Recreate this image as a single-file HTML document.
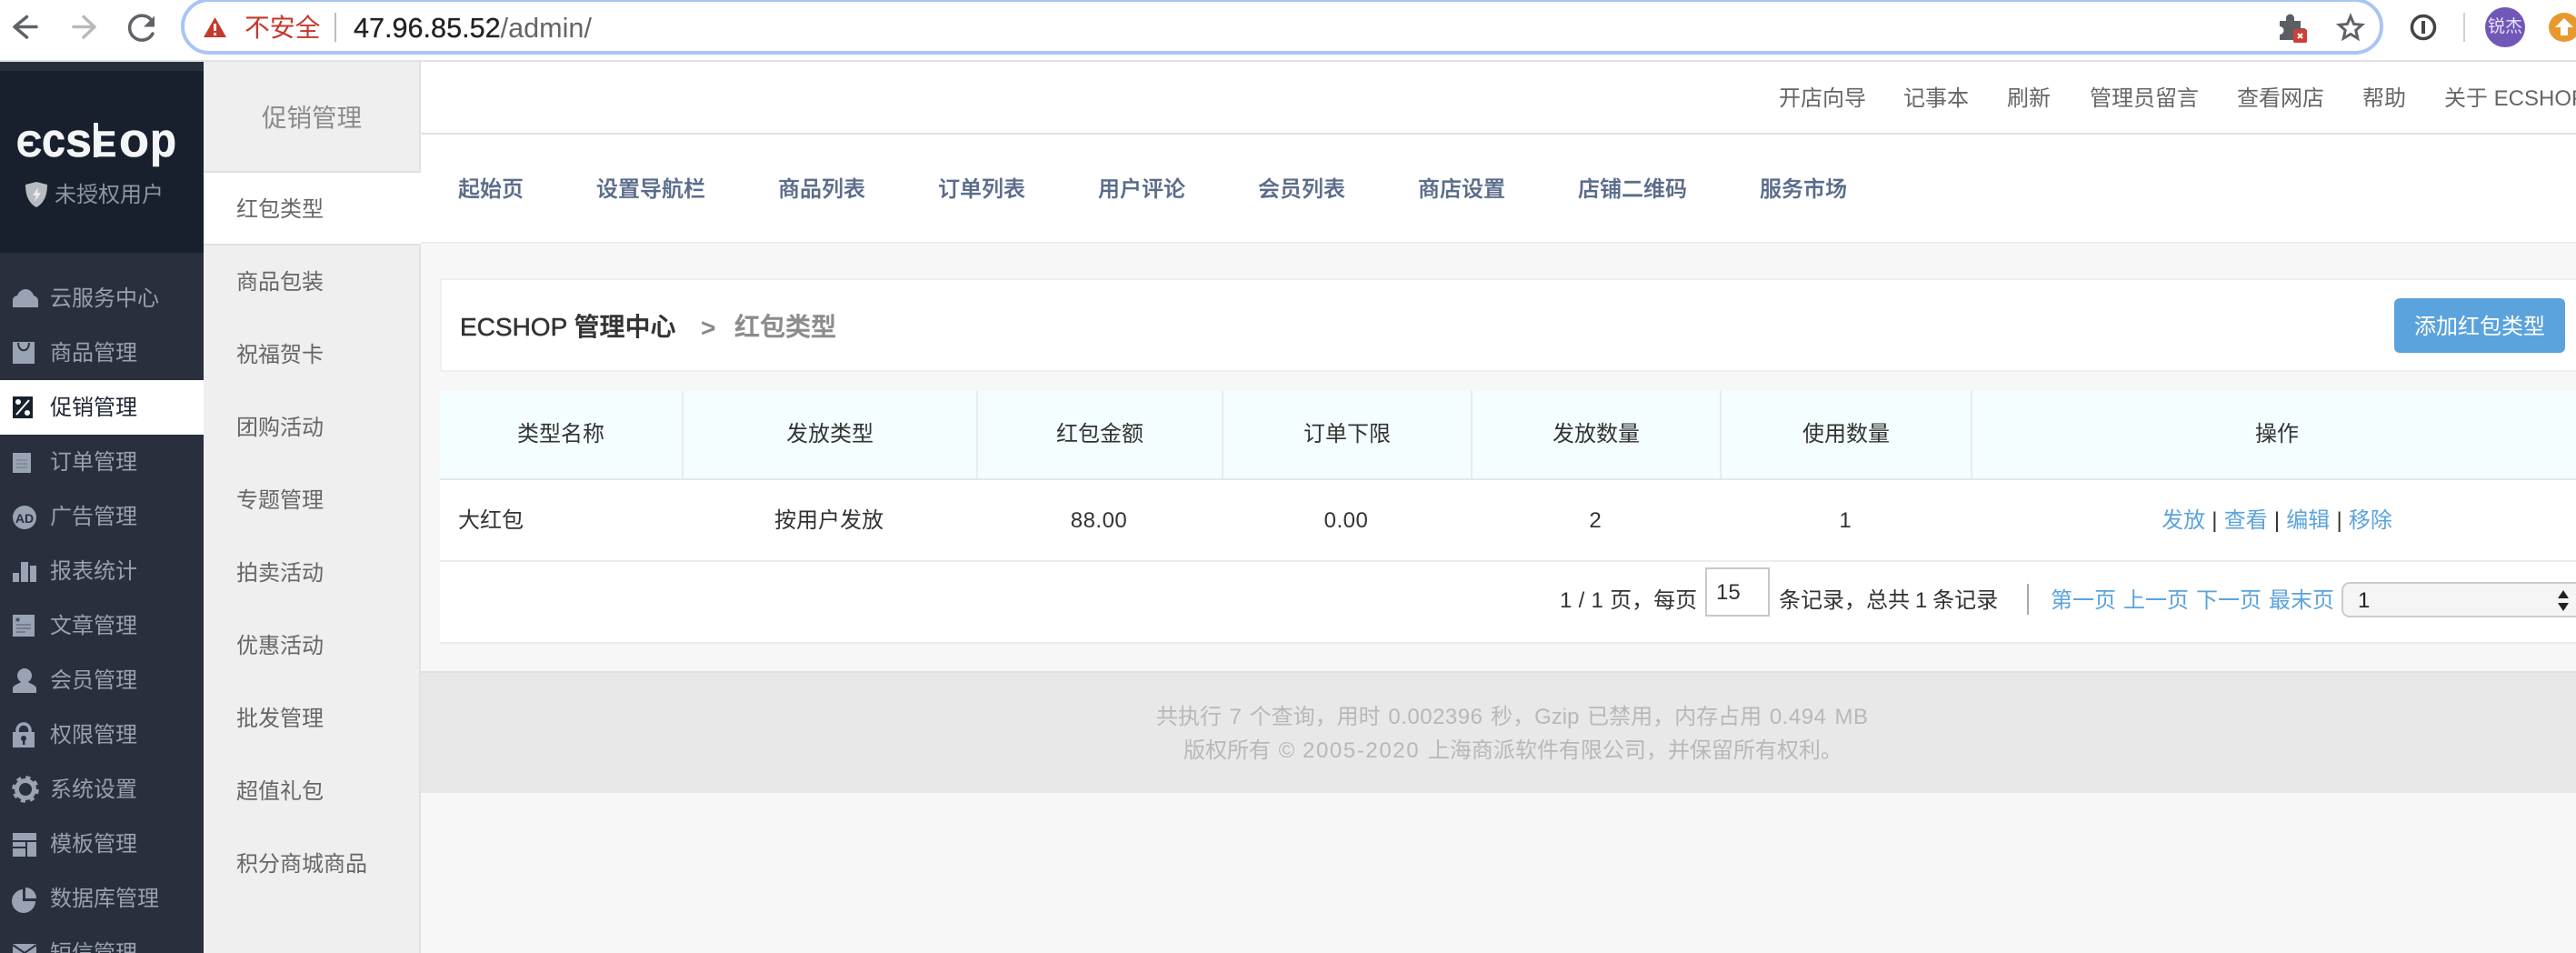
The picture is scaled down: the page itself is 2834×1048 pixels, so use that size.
<!DOCTYPE html>
<html lang="zh-CN"><head><meta charset="utf-8"><title>ECSHOP 管理中心</title>
<style>
*{margin:0;padding:0;box-sizing:border-box}
html,body{width:2834px;height:1048px;overflow:hidden;background:#f7f7f7}
body{position:relative;font-family:"Liberation Sans","Noto Sans CJK SC",sans-serif;font-size:24px;color:#333}
.a{position:absolute}
.t{position:absolute;white-space:nowrap;line-height:40px;height:40px;margin-top:2px}
.c{transform:translateX(-50%)}
.m{color:#98a1b0;left:55px}
.s{color:#666;left:260px}
.h{color:#666}
.n{color:#5a6c8a;font-weight:500;-webkit-text-stroke:.3px #5a6c8a}
.b{color:#5ba3dc}
.f{color:#b8b8b8;word-spacing:2px}
svg{position:absolute;overflow:visible}
.g{fill:#9aa3b3}
.l{font-family:"Liberation Sans",sans-serif;font-weight:700;fill:#f4f5f6;stroke:#f4f5f6;stroke-width:.6}
</style></head><body>
<!-- toolbar -->
<div class="a" style="left:0;top:0;width:2834px;height:66px;background:#fff"></div>
<div class="a" style="left:0;top:66px;width:2834px;height:2px;background:#e2e2e2"></div>
<svg style="left:0;top:0" width="200" height="66" fill="none" stroke-linecap="round" stroke-linejoin="round">
<path d="M16 29.500H40M29.500 18.500L16 29.500L29.500 41" stroke="#5f6368" stroke-width="3.500"/>
<path d="M81 29.500H104M92 18.500L104 29.500L92 41" stroke="#b8b9ba" stroke-width="3.500"/>
<path d="M166.500 22A13.500 13.500 0 1 0 168 37" stroke="#5f6368" stroke-width="3.500"/>
<path d="M170 17.500V29.500H158Z" fill="#5f6368"/>
</svg>
<div class="a" style="left:199px;top:-2px;width:2423px;height:62px;border:4px solid #a8c5f4;border-radius:31px;background:#fff"></div>
<svg style="left:224px;top:18px" width="26" height="24"><path d="M12.500 1L25 23H0Z" fill="#c5392c"/><rect x="11" y="8" width="3" height="8" fill="#fff"/><rect x="11" y="18" width="3" height="3" fill="#fff"/></svg>
<div class="t" style="left:269px;top:9px;font-size:27.800px;color:#c5392c">不安全</div>
<div class="a" style="left:368px;top:14px;width:2px;height:32px;background:#bdbdbd"></div>
<div class="t" style="left:389px;top:9px;font-size:30.600px;color:#222;-webkit-text-stroke:.3px #222">47.96.85.52<span style="color:#666;-webkit-text-stroke:0">/admin/</span></div>
<svg style="left:2506px;top:14px" width="34" height="34"><path d="M2 9H9V6A4.500 4.500 0 0 1 18 6V9H25V17H28A4 4 0 0 1 28 25H25V30H2V24A4 4 0 0 0 2 15Z" fill="#5a5f66"/><rect x="17" y="18" width="15" height="15" rx="2" fill="#cf3f3a"/><path d="M22 23L27 28M27 23L22 28" stroke="#fff" stroke-width="2"/></svg>
<svg style="left:2571px;top:15px" width="30" height="30"><path d="M15 3L18.600 11.500L27.500 12.300L20.800 18.300L22.800 27.200L15 22.500L7.200 27.200L9.200 18.300L2.500 12.300L11.400 11.500Z" fill="none" stroke="#5f6368" stroke-width="3" stroke-linejoin="miter"/></svg>
<svg style="left:2651px;top:15px" width="30" height="30"><circle cx="15" cy="15" r="12.500" fill="#fff" stroke="#444" stroke-width="3.500"/><path d="M15 8V22" stroke="#444" stroke-width="4"/></svg>
<div class="a" style="left:2710px;top:14px;width:2px;height:32px;background:#cfcfcf"></div>
<div class="a" style="left:2734px;top:8px;width:44px;height:44px;border-radius:50%;background:#7157b8"></div>
<div class="t c" style="left:2756px;top:8px;font-size:19px;color:#e8e4f7">锐杰</div>
<div class="a" style="left:2804px;top:14px;width:34px;height:32px;border-radius:50%;background:#e69a2e"></div>
<svg style="left:2811px;top:19px" width="20" height="22"><path d="M10 1L20 11H14V20H6V11H0Z" fill="#fff"/></svg>

<!-- left sidebar -->
<div class="a" style="left:0;top:68px;width:224px;height:980px;background:#2a2f3d"></div>
<div class="a" style="left:0;top:68px;width:224px;height:10px;background:#28303e"></div>
<div class="a" style="left:0;top:78px;width:224px;height:200px;background:#18202e"></div>
<svg style="left:0;top:120px" width="224" height="70">
<text class="l" x="18" y="52" font-size="40" textLength="28" lengthAdjust="spacingAndGlyphs">Є</text>
<text class="l" x="46" y="52" font-size="53" textLength="26" lengthAdjust="spacingAndGlyphs">c</text>
<text class="l" x="72" y="52" font-size="53" textLength="29" lengthAdjust="spacingAndGlyphs">s</text>
<text class="l" x="103" y="52" font-size="40" textLength="25" lengthAdjust="spacingAndGlyphs">E</text>
<rect x="103" y="15" width="5" height="38" fill="#f4f5f6"/>
<text class="l" x="131" y="52" font-size="53" textLength="33" lengthAdjust="spacingAndGlyphs">o</text>
<text class="l" x="165" y="52" font-size="53" textLength="29" lengthAdjust="spacingAndGlyphs">p</text>
</svg>
<svg style="left:27px;top:199px" width="26" height="30"><path d="M13 1L25 4C25 15 22 24 13 29C4 24 1 15 1 4Z" fill="#b8bcc2"/><path d="M15 7L9 16H13L11 23L18 13H14Z" fill="#eceef0"/></svg>
<div class="t" style="left:60px;top:193px;color:#8d95a3">未授权用户</div>
<div class="a" style="left:0;top:418px;width:224px;height:60px;background:#fff"></div>

<div class="t m" style="top:307px">云服务中心</div>
<div class="t m" style="top:367px">商品管理</div>
<div class="t m" style="top:427px;color:#1d2532">促销管理</div>
<div class="t m" style="top:487px">订单管理</div>
<div class="t m" style="top:547px">广告管理</div>
<div class="t m" style="top:607px">报表统计</div>
<div class="t m" style="top:667px">文章管理</div>
<div class="t m" style="top:727px">会员管理</div>
<div class="t m" style="top:787px">权限管理</div>
<div class="t m" style="top:847px">系统设置</div>
<div class="t m" style="top:907px">模板管理</div>
<div class="t m" style="top:967px">数据库管理</div>
<div class="t m" style="top:1027px">短信管理</div>

<svg style="left:0;top:0" width="224" height="1048">
<path class="g" d="M14 338V330C14 327 17 325 19 325C21 320 25 318 28 318C32 318 36 321 37 325C40 326 42 328 42 331V338Z"/>
<path class="g" d="M14 376H38V400H14Z"/><path d="M20 377C20 388 32 388 32 377" fill="none" stroke="#2a2f3d" stroke-width="2"/>
<rect x="14" y="436" width="22" height="24" fill="#18202e"/><path d="M18 456L32 440" stroke="#fff" stroke-width="2"/><circle cx="20" cy="442" r="3" fill="#fff"/><circle cx="30" cy="454" r="3" fill="#fff"/>
<path class="g" d="M14 498H34V520H14Z"/><path d="M18 506H30M18 510H30M18 514H30" stroke="#7d8695" stroke-width="1.500"/>
<circle class="g" cx="27" cy="569" r="13"/><text x="27" y="575" text-anchor="middle" font-family="Liberation Sans" font-weight="700" font-size="14" fill="#2a2f3d">AD</text>
<path class="g" d="M14 630H21V640H14ZM23 618H31V640H23ZM33 622H40V640H33Z"/>
<path class="g" d="M14 676H38V700H14Z"/><path d="M18 680H21V683H18ZM18 687H34M18 691H34M18 695H28" stroke="#697283" stroke-width="1.500"/>
<circle class="g" cx="27" cy="743" r="8"/><path class="g" d="M14 762V757C14 753 22 752 24 749H30C32 752 40 753 40 757V762Z"/>
<path class="g" d="M14 805H38V822H14Z"/><path d="M19 806V803A7 7 0 0 1 33 803V806" fill="none" stroke="#9aa3b3" stroke-width="3.500"/><circle cx="26" cy="812" r="3" fill="#2a2f3d"/><rect x="25" y="813" width="2.500" height="6" fill="#2a2f3d"/>
<circle cx="28" cy="868" r="9.500" fill="none" stroke="#9aa3b3" stroke-width="5"/><circle cx="28" cy="868" r="13" fill="none" stroke="#9aa3b3" stroke-width="3.500" stroke-dasharray="5 5.200"/>
<path class="g" d="M14 916H40V924H14ZM14 926H28V931H14ZM14 933H28V942H14ZM30 926H40V942H30Z"/>
<path class="g" d="M25 978V991H39A13 13 0 1 1 25 978Z"/><path class="g" d="M28 976A12 12 0 0 1 40 988H28Z"/>
<path class="g" d="M14 1038H40V1048H14Z"/><path d="M14 1039L27 1048L40 1039" fill="none" stroke="#2a2f3d" stroke-width="2"/>
</svg>

<!-- sub menu -->
<div class="a" style="left:224px;top:68px;width:239px;height:980px;background:#efefef;border-right:2px solid #e2e2e2"></div>
<div class="t c" style="left:343px;top:108px;font-size:27.500px;color:#8a8a8a">促销管理</div>
<div class="a" style="left:224px;top:188px;width:239px;height:82px;background:#fff;border-top:2px solid #e2e2e2;border-bottom:2px solid #e2e2e2"></div>
<div class="t s" style="top:209px">红包类型</div>
<div class="t s" style="top:289px">商品包装</div>
<div class="t s" style="top:369px">祝福贺卡</div>
<div class="t s" style="top:449px">团购活动</div>
<div class="t s" style="top:529px">专题管理</div>
<div class="t s" style="top:609px">拍卖活动</div>
<div class="t s" style="top:689px">优惠活动</div>
<div class="t s" style="top:769px">批发管理</div>
<div class="t s" style="top:849px">超值礼包</div>
<div class="t s" style="top:929px">积分商城商品</div>

<!-- top header -->
<div class="a" style="left:463px;top:68px;width:2371px;height:200px;background:#fff"></div>
<div class="a" style="left:463px;top:146px;width:2371px;height:2px;background:#e2e2e2"></div>
<div class="a" style="left:463px;top:266px;width:2371px;height:2px;background:#ececec"></div>
<div class="t h" style="left:1957px;top:87px">开店向导</div>
<div class="t h" style="left:2094px;top:87px">记事本</div>
<div class="t h" style="left:2208px;top:87px">刷新</div>
<div class="t h" style="left:2299px;top:87px">管理员留言</div>
<div class="t h" style="left:2461px;top:87px">查看网店</div>
<div class="t h" style="left:2599px;top:87px">帮助</div>
<div class="t h" style="left:2689px;top:87px">关于 ECSHOP</div>

<div class="t n" style="left:504px;top:187px">起始页</div>
<div class="t n" style="left:656px;top:187px">设置导航栏</div>
<div class="t n" style="left:856px;top:187px">商品列表</div>
<div class="t n" style="left:1032px;top:187px">订单列表</div>
<div class="t n" style="left:1208px;top:187px">用户评论</div>
<div class="t n" style="left:1384px;top:187px">会员列表</div>
<div class="t n" style="left:1560px;top:187px">商店设置</div>
<div class="t n" style="left:1736px;top:187px">店铺二维码</div>
<div class="t n" style="left:1936px;top:187px">服务市场</div>

<!-- breadcrumb -->
<div class="a" style="left:484px;top:306px;width:2350px;height:103px;background:#fff;border:2px solid #efefef;border-right:0"></div>
<div class="t" style="left:506px;top:338px;font-size:28px;font-weight:500;color:#333;-webkit-text-stroke:.5px #333">ECSHOP 管理中心</div>
<div class="t" style="left:771px;top:339px;font-size:28px;font-weight:700;color:#888">&gt;</div>
<div class="t" style="left:808px;top:338px;font-size:28px;font-weight:500;color:#8c8c8c;-webkit-text-stroke:.6px #8c8c8c">红包类型</div>
<div class="a" style="left:2634px;top:328px;width:188px;height:60px;background:#5ba3dc;border-radius:6px"></div>
<div class="t c" style="left:2728px;top:338px;color:#fff">添加红包类型</div>

<!-- table -->
<div class="a" style="left:484px;top:430px;width:2350px;height:96px;background:#f4fdff"></div>
<div class="a" style="left:484px;top:526px;width:2350px;height:2px;background:#e6e8ea"></div>
<div class="a" style="left:750px;top:430px;width:2px;height:96px;background:#e8ecee"></div>
<div class="a" style="left:1074px;top:430px;width:2px;height:96px;background:#e8ecee"></div>
<div class="a" style="left:1344px;top:430px;width:2px;height:96px;background:#e8ecee"></div>
<div class="a" style="left:1618px;top:430px;width:2px;height:96px;background:#e8ecee"></div>
<div class="a" style="left:1892px;top:430px;width:2px;height:96px;background:#e8ecee"></div>
<div class="a" style="left:2168px;top:430px;width:2px;height:96px;background:#e8ecee"></div>
<div class="t c" style="left:617px;top:456px">类型名称</div>
<div class="t c" style="left:913px;top:456px">发放类型</div>
<div class="t c" style="left:1210px;top:456px">红包金额</div>
<div class="t c" style="left:1482px;top:456px">订单下限</div>
<div class="t c" style="left:1756px;top:456px">发放数量</div>
<div class="t c" style="left:2031px;top:456px">使用数量</div>
<div class="t c" style="left:2505px;top:456px">操作</div>

<div class="a" style="left:484px;top:528px;width:2350px;height:88px;background:#fff"></div>
<div class="a" style="left:484px;top:616px;width:2350px;height:2px;background:#ececec"></div>
<div class="t" style="left:504px;top:551px">大红包</div>
<div class="t c" style="left:912px;top:551px">按用户发放</div>
<div class="t c" style="left:1209px;top:551px;letter-spacing:.5px">88.00</div>
<div class="t c" style="left:1481px;top:551px;letter-spacing:.5px">0.00</div>
<div class="t c" style="left:1755px;top:551px">2</div>
<div class="t c" style="left:2030px;top:551px">1</div>
<div class="t c" style="left:2505px;top:551px;word-spacing:.5px"><span class="b">发放</span> | <span class="b">查看</span> | <span class="b">编辑</span> | <span class="b">移除</span></div>

<div class="a" style="left:484px;top:618px;width:2350px;height:88px;background:#fff"></div>
<div class="a" style="left:484px;top:706px;width:2350px;height:2px;background:#ececec"></div>
<div class="t" style="left:1716px;top:639px;word-spacing:.6px">1 / 1 页，每页</div>
<div class="a" style="left:1876px;top:624px;width:71px;height:54px;border:2px solid #c8c8c8;background:#fff"></div>
<div class="t" style="left:1888px;top:630px">15</div>
<div class="t" style="left:1957px;top:639px;word-spacing:-.8px">条记录，总共 1 条记录</div>
<div class="a" style="left:2230px;top:642px;width:2px;height:34px;background:#aaa"></div>
<div class="t b" style="left:2256px;top:639px">第一页</div>
<div class="t b" style="left:2336px;top:639px">上一页</div>
<div class="t b" style="left:2416px;top:639px">下一页</div>
<div class="t b" style="left:2496px;top:639px">最末页</div>
<div class="a" style="left:2576px;top:640px;width:270px;height:39px;background:#f5f5f5;border:2px solid #cbcbcb;border-radius:9px"></div>
<div class="t" style="left:2594px;top:639px;color:#222">1</div>
<svg style="left:2814px;top:649px" width="12" height="23"><path d="M6 0L12 9H0ZM0 14H12L6 23Z" fill="#222"/></svg>

<!-- footer -->
<div class="a" style="left:463px;top:738px;width:2371px;height:134px;background:#e8e8e8;border-top:2px solid #e0e0e0"></div>
<div class="t f" style="left:1272px;top:767px">共执行 7 个查询，用时 <span style="letter-spacing:.5px">0.002396</span> 秒，Gzip 已禁用，内存占用 <span style="letter-spacing:.5px">0.494 MB</span></div>
<div class="t f" style="left:1302px;top:804px">版权所有 © <span style="letter-spacing:1.600px">2005-2020</span> 上海商派软件有限公司，并保留所有权利。</div>
</body></html>
